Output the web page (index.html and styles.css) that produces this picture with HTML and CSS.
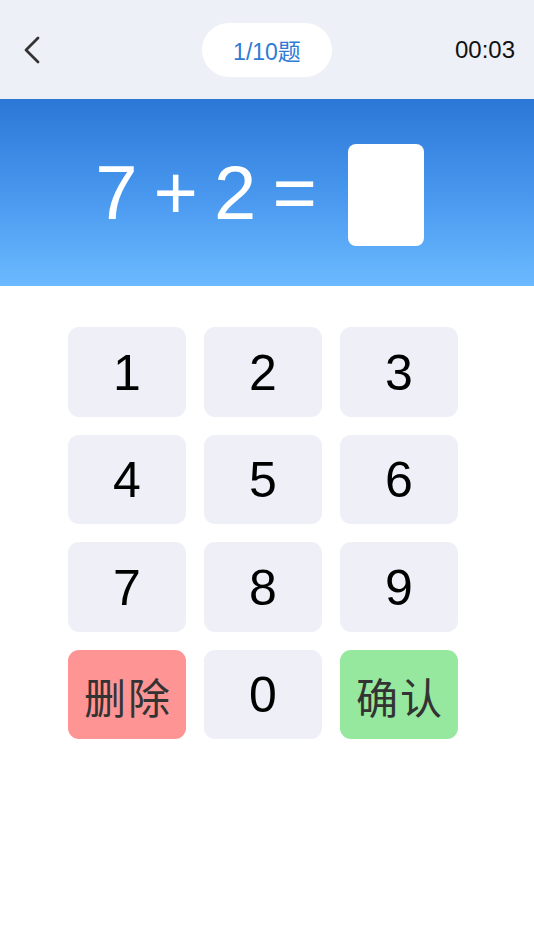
FILE: index.html
```html
<!DOCTYPE html>
<html lang="zh">
<head>
  <meta charset="UTF-8" />
  <meta name="viewport" content="width=device-width, initial-scale=1.0" />
  <title>口算练习</title>
  <link rel="stylesheet" href="styles.css">
</head>
<body>
  <div class="header">
    <div class="back">
      <svg width="18" height="28" viewBox="0 0 18 28"><path d="M15 2 L3 14 L15 26" fill="none" stroke="#333" stroke-width="2.8" stroke-linecap="round" stroke-linejoin="round"/></svg>
    </div>
    <div class="progress">1/10题</div>
    <div class="timer">00:03</div>
  </div>

  <div class="question">
    <span class="expr">7 + 2 =</span>
    <div class="answer"></div>
  </div>

  <div class="keypad">
    <button class="key">1</button>
    <button class="key">2</button>
    <button class="key">3</button>
    <button class="key">4</button>
    <button class="key">5</button>
    <button class="key">6</button>
    <button class="key">7</button>
    <button class="key">8</button>
    <button class="key">9</button>
    <button class="key key-del">删除</button>
    <button class="key">0</button>
    <button class="key key-ok">确认</button>
  </div>
</body>
</html>
```

FILE: styles.css
```css
body {
  margin: 0;
  font-family: "Liberation Sans", Arial, "Noto Sans CJK SC", sans-serif;
  background: #fff;
}
.header {
  height: 99px;
  background: #eef0f7;
  display: flex;
  align-items: center;
  justify-content: space-between;
  padding: 0 19px 0 23px;
  position: relative;
}
.back {
  width: 18px;
  height: 28px;
  display: flex;
}
.progress {
  position: absolute;
  left: 202px;
  top: 23px;
  width: 130px;
  height: 54px;
  border-radius: 27px;
  background: #fff;
  color: #2e7bd6;
  font-size: 23px;
  display: flex;
  align-items: center;
  justify-content: center;
}
.timer {
  font-size: 24px;
  color: #111;
}
.question {
  height: 187px;
  background: linear-gradient(#2a77d6, #4b9af0 55%, #6bbaff);
  display: flex;
  align-items: center;
  justify-content: center;
  gap: 31px;
  padding-right: 15px;
}
.expr {
  color: #fff;
  font-size: 76px;
  word-spacing: -5px;
}
.answer {
  width: 76px;
  height: 102px;
  background: #fff;
  border-radius: 8px;
  margin-top: 4px;
}
.keypad {
  display: grid;
  grid-template-columns: repeat(3, 118px);
  grid-auto-rows: 89.5px;
  gap: 18px;
  padding: 41px 0 0 68px;
}
.key {
  border: none;
  border-radius: 11px;
  background: #eff0f7;
  font-family: "Liberation Sans", Arial, "Noto Sans CJK SC", sans-serif;
  font-size: 50px;
  color: #000;
  padding: 2px 0 0;
}
.key-del, .key-ok {
  font-size: 42px;
  letter-spacing: 2px;
  text-indent: 2px;
  color: #333;
}
.key-del {
  background: #ff9494;
}
.key-ok {
  background: #95e89e;
}
```
